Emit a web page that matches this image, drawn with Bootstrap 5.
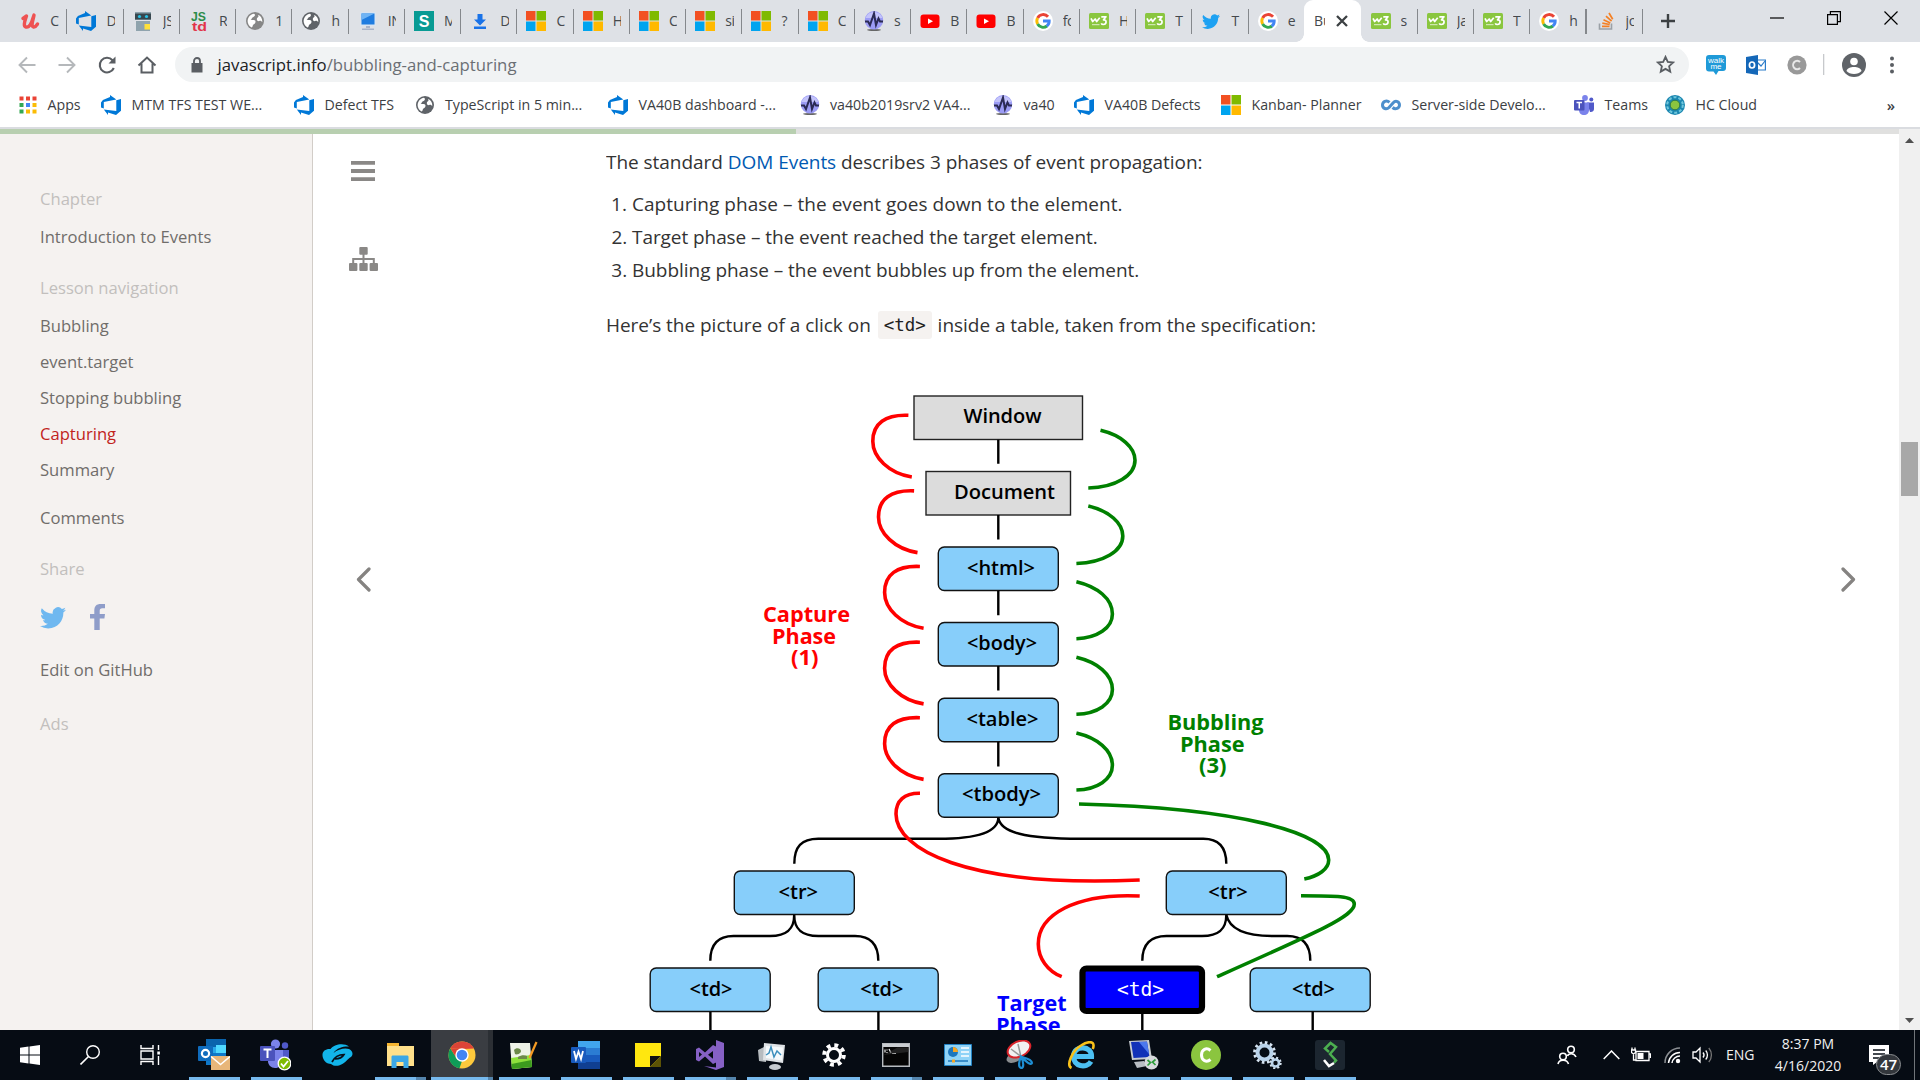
<!DOCTYPE html>
<html lang="en">
<head>
<meta charset="utf-8">
<title>Bubbling and capturing</title>
<link href="https://cdn.jsdelivr.net/npm/bootstrap@5.3.0/dist/css/bootstrap.min.css" rel="stylesheet">
<script src="https://cdn.jsdelivr.net/npm/bootstrap@5.3.0/dist/js/bootstrap.bundle.min.js"></script>
<style>
body{height:1080px;font-family:"Open Sans","Noto Sans",sans-serif;color:#333;background:#fff}
svg{display:block;flex:none}
.ic{width:20px;height:20px}
/* tab strip */
.tabstrip{height:42px;background:#dee1e6;padding-left:10.2px;font-size:14px;color:#45494d}
.btab{width:56.26px;height:42px;padding-left:10px;gap:10px;position:relative;flex:none}
.btab:not(.last)::after{content:"";position:absolute;right:-1px;top:9px;width:1.2px;height:25px;background:#85888c}
.btab .ttl{width:8.5px;overflow:hidden;white-space:nowrap;line-height:20px;letter-spacing:-.3px}
.btab-active{width:56.6px;height:42px;background:#fff;border-radius:9px 9px 0 0;position:relative;padding-left:10px;gap:11px;flex:none}
.btab-active::before,.btab-active::after{content:"";position:absolute;bottom:0;width:8px;height:8px}
.btab-active::before{left:-8px;background:radial-gradient(circle at 0 0,transparent 7.5px,#fff 8px)}
.btab-active::after{right:-8px;background:radial-gradient(circle at 100% 0,transparent 7.5px,#fff 8px)}
.btab-active .ttl{width:11px;overflow:hidden;line-height:20px}
.newtab{margin-left:18.5px}
.winctl{padding-right:22px;gap:43px;padding-bottom:6px}
/* toolbar */
.toolrow{height:45px;padding-left:17px;padding-right:18px}
.navbtns{width:158px;gap:20px}
.omni{height:35px;width:1514px;border-radius:18px;background:#f1f3f4;padding:0 14px 0 15px;font-size:16.75px;color:#6b6f74}
.omni .url{margin-left:13.5px}
.omni .host{color:#202124}
.exts{padding-left:17px}
/* bookmarks */
.bmrow{height:40px;padding-left:18px;font-size:14.2px;color:#3c4043;border:0}
.bm{gap:10.5px;white-space:nowrap;flex:none}
.bm:nth-child(1){width:83px;gap:9.5px}.bm:nth-child(2){width:193px}.bm:nth-child(3){width:120.5px}.bm:nth-child(4){width:193.5px}
.bm:nth-child(5){width:191.5px}.bm:nth-child(6){width:193.5px}.bm:nth-child(7){width:81px}.bm:nth-child(8){width:147px}
.bm:nth-child(9){width:160px}.bm:nth-child(10){width:193px}.bm:nth-child(11){width:91px}.bm:nth-child(12){width:130px}
.more{margin-right:25px;font-size:15px}
.hairline{height:2px;background:#dadce0}
/* page */
.page{height:901px}
.readbar{--bs-progress-height:5px;--bs-progress-bg:#e0e0df;--bs-progress-bar-bg:#b8cfb0;border-radius:0}
.side{width:313px;background:#f5f2f0;border-right:1.3px solid #d2cdc8;padding:47px 0 0 40px;font-size:16.6px;color:#706d6a;line-height:36px}
.side h4{font-size:inherit;line-height:36px;font-weight:400;color:#c2bfbd;margin:15.5px 0 0}
.side h4:first-child{margin:0 0 1.5px}
.side ul{padding-top:1.5px}
.side li,.side .ln{height:36px}
.side .cur{color:#c1231c}
.side .comments{margin-top:12px}
.side .social{gap:24px;height:26px;margin:17px 0 22px}
.side .ads{margin-top:17.5px}
.railL{width:293px;padding:27px 0 0 35px}
.railL>div{width:30px}
.tree{margin:66px 0 296px}
.lesson{width:820px;padding-top:11.5px;font-size:19px;line-height:33px;letter-spacing:-.03px;overflow:hidden;flex:none}
.lesson p{margin:0;white-space:nowrap}
.lesson p:first-child{letter-spacing:-.04px}
.lesson li:first-child{letter-spacing:.03px}
.lesson li:nth-child(2){letter-spacing:-.07px}
.lesson a{color:#0059b2;text-decoration:none}
.lesson ol{margin:9.5px 0 22px;padding:0 0 0 26px}
.lesson code{display:inline-block;font:17.5px/28px "DejaVu Sans Mono",monospace;color:#222;background:#f5f2f0;border-radius:3px;padding:0 6px;margin:0 1px 0 2px;vertical-align:1px}
.dia text{font-weight:600;font-size:19.4px}
.dia .lg text{font-weight:700;font-size:22px}
.dia .hot{font-family:"DejaVu Sans Mono",monospace;font-weight:400}
.railR{padding:433px 43px 0 0}
.sbar{width:21px;background:#f0f0f0}
.sbar .thumb{width:17px;height:54px;background:#a8a8a8;margin:299px 2px 0}
.sbar .up{margin-top:9px}.sbar .down{margin-bottom:7px}
/* taskbar */
.taskbar{height:50px;background:#060c14;color:#f1f1f1}
.tk{width:62px;height:50px;flex:none;position:relative}
.tk.sm{width:60px}.tk.md{width:62.5px}
.tk.md svg{margin-right:2px}
.tk.run::after{content:"";position:absolute;left:6px;width:51px;bottom:0;height:3px;background:#76b9ed}
.tk.multi::after{background:linear-gradient(90deg,#76b9ed 41px,#5485ad 41px)}
.tk.front{background:linear-gradient(90deg,#3a3d42 57px,#2b2f34 57px)}
.tk.front::after{left:0;width:62px;background:linear-gradient(90deg,#76b9ed 57px,#5485ad 57px)}
.tray{font-size:14px;line-height:22.5px;padding-right:5px}
.tray .eng{width:47px}
.tray .clock{width:70px;white-space:nowrap}
.tray .note{margin:0 25px 0 26px}
.cnt{position:absolute;left:7px;top:9px;width:25px;height:21px;border-radius:11px;background:#33373c;border:1px solid #8a8d90;font-size:15px;font-weight:600;line-height:18px;text-align:center;color:#fff}
</style>
</head>
<body class="d-flex flex-column overflow-hidden">
<svg width="0" height="0" class="position-absolute" aria-hidden="true">
<symbol id="az" viewBox="0 0 20 20"><path fill="#0078d7" d="M0 7.4 1.9 4.9 9 2V0l6.300 4.500L2.800 7v6.400L0 12.600zM20 4v11.700l-5 4.300-8-2.600V20L2.800 14.600l12.500 1.500V5.300z"/></symbol>
<symbol id="ms" viewBox="0 0 20 20"><path fill="#f25022" d="M0 0h9.500v9.500H0z"/><path fill="#7fba00" d="M10.500 0H20v9.500h-9.500z"/><path fill="#00a4ef" d="M0 10.500h9.500V20H0z"/><path fill="#ffb900" d="M10.500 10.500H20V20h-9.500z"/></symbol>
<symbol id="globe" viewBox="0 0 20 20"><circle cx="10" cy="10" r="9" fill="currentColor"/><path fill="#fff" d="M9 2.800c2 1 .5 3-1 3.500S7 8.500 5.500 9c2 0 5-.5 5 1.500s-1 2.500-2 3S8 16 6.500 16.500C4 15 2.600 12.500 2.600 10 3 6 5.500 3.200 9 2.800zM13.500 4c2.500 1.200 4 4 3.800 7-1-.5-1.500-1.500-3-1s-2.500-.5-2.500-2 1.700-1.500 1.700-2.500-.7-1 0-1.500z"/></symbol>
<symbol id="pulse" viewBox="0 0 20 20"><ellipse cx="10" cy="19" rx="7" ry=".9" fill="#666"/><circle cx="10" cy="9.300" r="9.200" fill="#9c9cf5"/><path d="M1.500 7a9 9 0 0 1 17 0z" fill="#c3c3fb"/><path fill="none" stroke="#2b2b55" stroke-width="2" d="M1 10.500h3l2 3.500L10 2.500 12 14l2.500-6.500 1.500 3h3"/></symbol>
<symbol id="yt" viewBox="0 0 20 20"><rect x=".5" y="3.500" width="19" height="13.500" rx="3" fill="#f00"/><path fill="#fff" d="m8 7.500 5 2.800-5 2.800z"/></symbol>
<symbol id="goo" viewBox="0 0 20 20"><circle cx="10" cy="10" r="10" fill="#fff"/><g fill="none" stroke-width="2.900"><path stroke="#ea4335" d="M15 5.700A6.300 6.300 0 0 0 4.600 7"/><path stroke="#fbbc05" d="M4.600 7a6.300 6.300 0 0 0 0 6"/><path stroke="#34a853" d="M4.600 13a6.300 6.300 0 0 0 9.400 2"/><path stroke="#4285f4" d="M13.700 15.200A6.300 6.300 0 0 0 16.200 10H10"/></g></symbol>
<symbol id="w3" viewBox="0 0 20 20"><rect y="2" width="20" height="16" rx="1.500" fill="#8ac63f"/><path fill="none" stroke="#fff" stroke-width="1.700" stroke-linejoin="round" d="m2 7.300 1.700 3.200L6.200 8l1.500 2.500 3-3.700M12.300 5.800H17l-2.500 3c3.600-.2 3.300 4.700-.2 4.700-1 0-1.700-.4-2.100-1.200"/><path stroke="#dff0c8" stroke-width="1" d="M3 13.700h7.500"/></symbol>
<symbol id="tw" viewBox="0 0 16 16"><path fill="currentColor" d="M5.026 15c6.038 0 9.341-5.003 9.341-9.334 0-.14 0-.282-.006-.422A6.685 6.685 0 0 0 16 3.542a6.658 6.658 0 0 1-1.889.518 3.301 3.301 0 0 0 1.447-1.817 6.533 6.533 0 0 1-2.087.793A3.286 3.286 0 0 0 7.875 6.030a9.325 9.325 0 0 1-6.767-3.429 3.289 3.289 0 0 0 1.018 4.382A3.323 3.323 0 0 1 .64 6.575v.045a3.288 3.288 0 0 0 2.632 3.218 3.203 3.203 0 0 1-.865.115 3.230 3.230 0 0 1-.614-.057 3.283 3.283 0 0 0 3.067 2.277A6.588 6.588 0 0 1 .780 13.580a6.320 6.320 0 0 1-.780-.045A9.344 9.344 0 0 0 5.026 15z"/></symbol>
</svg>

<header>
<div class="tabstrip d-flex align-items-center">
<div class="btab d-flex align-items-center"><svg class="ic" viewBox="0 0 20 20"><path fill="none" stroke="#ee5252" stroke-width="3.400" stroke-linecap="round" stroke-linejoin="round" d="M3 7.500 6.500 5c-1 3.500-4 10-.5 11s6-5 7-9l1-3c-.5 4-3.500 11-.5 12 1.800.5 3-1.500 4-3"/></svg><span class="ttl">C</span></div>
<div class="btab d-flex align-items-center"><svg class="ic"><use href="#az"/></svg><span class="ttl">D</span></div>
<div class="btab d-flex align-items-center"><svg class="ic" viewBox="0 0 20 20"><path fill="#8fa3ad" d="M2 1h16v8H2zM3 10h14v10H3z"/><path fill="#37474f" d="M2 2.500h16v6H2z"/><circle cx="6.500" cy="5.500" r="1.600" fill="#29c4e8"/><circle cx="13.500" cy="5.500" r="1.600" fill="#29c4e8"/><path fill="#ffe13a" d="M11.500 13h5.500v5.500h-5.500z"/></svg><span class="ttl">JS</span></div>
<div class="btab d-flex align-items-center"><svg class="ic" viewBox="0 0 20 20"><text x="2" y="10" font-family="Liberation Sans" font-weight="700" font-size="13" fill="#2c8c4a" textLength="15" lengthAdjust="spacingAndGlyphs">JS</text><text x="3" y="19.500" font-family="Liberation Sans" font-weight="700" font-size="13" fill="#e2344a" textLength="15" lengthAdjust="spacingAndGlyphs">td</text></svg><span class="ttl">R</span></div>
<div class="btab d-flex align-items-center"><svg class="ic" color="#868686"><use href="#globe"/></svg><span class="ttl">1</span></div>
<div class="btab d-flex align-items-center"><svg class="ic" color="#5f6368"><use href="#globe"/></svg><span class="ttl">h</span></div>
<div class="btab d-flex align-items-center"><svg class="ic" viewBox="0 0 20 20"><rect x="2" y="1" width="16" height="14" rx="1" fill="#d9e4f1"/><rect x="3.500" y="2.500" width="13" height="11" fill="#1f7ce0"/><path fill="#6fb4f5" d="M3.500 2.500h13L3.500 9z"/><path fill="#a9b4c9" d="M8 15h4v2H8zM4 17.500h12V19H4z"/></svg><span class="ttl">IN</span></div>
<div class="btab d-flex align-items-center"><svg class="ic" viewBox="0 0 20 20"><path fill="#089b94" d="M0 0h20v20H0z"/><text x="10" y="16" text-anchor="middle" font-family="Liberation Sans" font-weight="700" font-size="16" fill="#fff">S</text></svg><span class="ttl">M</span></div>
<div class="btab d-flex align-items-center"><svg class="ic" viewBox="0 0 20 20"><path fill="#1a73e8" d="M7.500 3h5v5.500H16l-6 6-6-6h3.500zM4 15.500h12V18H4z"/></svg><span class="ttl">D</span></div>
<div class="btab d-flex align-items-center"><svg class="ic"><use href="#ms"/></svg><span class="ttl">C</span></div>
<div class="btab d-flex align-items-center"><svg class="ic"><use href="#ms"/></svg><span class="ttl">H</span></div>
<div class="btab d-flex align-items-center"><svg class="ic"><use href="#ms"/></svg><span class="ttl">C</span></div>
<div class="btab d-flex align-items-center"><svg class="ic"><use href="#ms"/></svg><span class="ttl">si</span></div>
<div class="btab d-flex align-items-center"><svg class="ic"><use href="#ms"/></svg><span class="ttl">?</span></div>
<div class="btab d-flex align-items-center"><svg class="ic"><use href="#ms"/></svg><span class="ttl">C</span></div>
<div class="btab d-flex align-items-center"><svg class="ic"><use href="#pulse"/></svg><span class="ttl">s</span></div>
<div class="btab d-flex align-items-center"><svg class="ic"><use href="#yt"/></svg><span class="ttl">B</span></div>
<div class="btab d-flex align-items-center"><svg class="ic"><use href="#yt"/></svg><span class="ttl">B</span></div>
<div class="btab d-flex align-items-center"><svg class="ic"><use href="#goo"/></svg><span class="ttl">fo</span></div>
<div class="btab d-flex align-items-center"><svg class="ic"><use href="#w3"/></svg><span class="ttl">H</span></div>
<div class="btab d-flex align-items-center"><svg class="ic"><use href="#w3"/></svg><span class="ttl">T</span></div>
<div class="btab d-flex align-items-center"><svg class="ic" color="#1da1f2"><use href="#tw" x="1" y="1" width="18" height="18"/></svg><span class="ttl">T</span></div>
<div class="btab last d-flex align-items-center"><svg class="ic"><use href="#goo"/></svg><span class="ttl">e</span></div>
<div class="btab-active d-flex align-items-center"><span class="ttl">Bu</span><svg width="12" height="12" viewBox="0 0 12 12"><path stroke="#3c4043" stroke-width="2.300" d="m1 1 10 10M11 1 1 11"/></svg></div>
<div class="btab d-flex align-items-center"><svg class="ic"><use href="#w3"/></svg><span class="ttl">s</span></div>
<div class="btab d-flex align-items-center"><svg class="ic"><use href="#w3"/></svg><span class="ttl">Ja</span></div>
<div class="btab d-flex align-items-center"><svg class="ic"><use href="#w3"/></svg><span class="ttl">T</span></div>
<div class="btab d-flex align-items-center"><svg class="ic"><use href="#goo"/></svg><span class="ttl">h</span></div>
<div class="btab d-flex align-items-center"><svg class="ic" viewBox="0 0 20 20"><path fill="none" stroke="#9aa0a6" stroke-width="1.600" d="M3.500 12.500V18h12v-5.500"/><g stroke="#f48024" stroke-width="1.700"><path d="M6 15.300h7.500M6.300 12.200l7.400 1.300M7.500 8.700l6.800 3.200M10 5.200l5.600 5M13 2l3.700 6.200"/></g></svg><span class="ttl">jo</span></div>
<svg class="newtab" width="16" height="16" viewBox="0 0 16 16"><path stroke="#3c4043" stroke-width="2.400" d="M8 1v14M1 8h14"/></svg>
<div class="winctl d-flex align-items-center ms-auto"><svg width="14" height="14"><path stroke="#000" stroke-width="1.200" d="M0 7h14"/></svg><svg width="14" height="14"><path fill="none" stroke="#000" stroke-width="1.200" d="M.6 3.600h9.800v9.800H.6zM3.400 3.600V.6h10v10h-3"/></svg><svg width="14" height="14"><path stroke="#000" stroke-width="1.200" d="m.5.5 13 13M13.500.5l-13 13"/></svg></div>
</div>

<div class="toolrow d-flex align-items-center">
<div class="navbtns d-flex align-items-center">
<svg class="ic" viewBox="0 0 20 20"><path fill="none" stroke="#b5b8bb" stroke-width="1.900" d="M18.500 10H3M10 2.500 2.500 10l7.500 7.500"/></svg>
<svg class="ic" viewBox="0 0 20 20"><path fill="none" stroke="#b5b8bb" stroke-width="1.900" d="M1.500 10H17M10 2.500l7.500 7.500-7.500 7.500"/></svg>
<svg class="ic" viewBox="0 0 20 20"><path fill="none" stroke="#5a5e63" stroke-width="2.100" d="M16.800 13A7.300 7.300 0 1 1 15.500 5.200L17 7"/><path fill="#5a5e63" d="M18.500 1.500v7h-7z"/></svg>
<svg class="ic" viewBox="0 0 20 20"><path fill="none" stroke="#5a5e63" stroke-width="2" d="M1.500 10.500 10 2.500l8.500 8M4.500 8.500v9h11v-9"/></svg>
</div>
<div class="omni d-flex align-items-center"><svg width="14" height="16" viewBox="0 0 14 16"><path fill="#5a5e63" d="M1.500 6h11v9.500h-11z"/><path fill="none" stroke="#5a5e63" stroke-width="1.800" d="M4 7V4a3 3 0 0 1 6 0v3"/></svg><span class="url"><span class="host">javascript.info</span>/bubbling-and-capturing</span>
<svg class="ms-auto" width="19" height="19" viewBox="0 0 20 20"><path fill="none" stroke="#5a5e63" stroke-width="1.900" d="m10 2 2.400 5.300 5.600.6-4.200 3.900 1.200 5.700-5-2.900-5 2.900 1.200-5.700L2 7.900l5.600-.6z"/></svg></div>
<div class="exts d-flex align-items-center flex-grow-1 justify-content-between">
<svg class="ic" viewBox="0 0 20 20"><path fill="#1f9ad8" d="M3 0h14a3 3 0 0 1 3 3v10a3 3 0 0 1-3 3h-4.500L10 20l-2.500-3.500H3a3 3 0 0 1-3-3V3a3 3 0 0 1 3-3z"/><g fill="#fff" font-family="Liberation Sans" font-size="8" text-anchor="middle"><text x="10" y="7.500">walk</text><text x="10" y="14">me</text></g></svg>
<svg class="ic ms-1" viewBox="0 0 20 20"><path fill="#fff" stroke="#2b7cc9" stroke-width="1.200" d="M11 5h8.400v10H11z"/><path fill="none" stroke="#2b7cc9" stroke-width="1.200" d="m11 7 4 4 4-5"/><path fill="#1467b8" d="m0 2 12-2v20L0 18z"/><ellipse cx="6" cy="10" rx="2.600" ry="3" fill="none" stroke="#fff" stroke-width="1.700"/></svg>
<svg class="ic ms-1" viewBox="0 0 20 20"><circle cx="10" cy="10" r="9.600" fill="#999"/><path fill="none" stroke="#e8e8e8" stroke-width="2" d="M13 7a4 4.300 0 1 0 0 6"/></svg>
<svg width="2" height="21"><path fill="#c7c9cc" d="M0 0h1.300v21H0z"/></svg>
<svg width="24" height="24" viewBox="0 0 24 24"><circle cx="12" cy="12" r="12" fill="#5f6368"/><circle cx="12" cy="8.500" r="3.800" fill="#fff"/><path fill="#fff" d="M4.500 18c1-5.300 14-5.300 15 0-3 4-12 4-15 0z"/></svg>
<svg width="20" height="20" viewBox="0 0 20 20"><g fill="#5a5e63"><circle cx="10" cy="3.500" r="2"/><circle cx="10" cy="10" r="2"/><circle cx="10" cy="16.500" r="2"/></g></svg>
</div>
</div>

<div class="bmrow d-flex align-items-center pb-1">
<div class="bm d-flex align-items-center"><svg class="ic" viewBox="0 0 20 20"><path fill="#ea4335" d="M1.500 1.500h4v4h-4zM8 1.500h4v4H8zM14.500 1.500h4v4h-4z"/><path fill="#34a853" d="M1.500 8h4v4h-4zM1.500 14.500h4v4h-4z"/><path fill="#4285f4" d="M8 8h4v4H8z"/><path fill="#fbbc05" d="M14.500 8h4v4h-4zM8 14.500h4v4H8zM14.500 14.500h4v4h-4z"/></svg>Apps</div>
<div class="bm d-flex align-items-center"><svg class="ic"><use href="#az"/></svg>MTM TFS TEST WE...</div>
<div class="bm d-flex align-items-center"><svg class="ic"><use href="#az"/></svg>Defect TFS</div>
<div class="bm d-flex align-items-center"><svg class="ic" color="#5f6368"><use href="#globe"/></svg>TypeScript in 5 min...</div>
<div class="bm d-flex align-items-center"><svg class="ic"><use href="#az"/></svg>VA40B dashboard -...</div>
<div class="bm d-flex align-items-center"><svg class="ic"><use href="#pulse"/></svg>va40b2019srv2 VA4...</div>
<div class="bm d-flex align-items-center"><svg class="ic"><use href="#pulse"/></svg>va40</div>
<div class="bm d-flex align-items-center"><svg class="ic"><use href="#az"/></svg>VA40B Defects</div>
<div class="bm d-flex align-items-center"><svg class="ic"><use href="#ms"/></svg>Kanban- Planner</div>
<div class="bm d-flex align-items-center"><svg class="ic" viewBox="0 0 20 20"><path fill="none" stroke="#4d8fcc" stroke-width="3" d="M8.500 7.300C5.500 4.500 1.500 6.500 1.500 10s4 5 6.500 2.500l4-4.500c3-3.500 6.500-1 6.500 2s-4 5-7 2.500"/></svg>Server-side Develo...</div>
<div class="bm d-flex align-items-center"><svg class="ic" viewBox="0 0 20 20"><circle cx="17.300" cy="4.500" r="2" fill="#5059c9"/><circle cx="11" cy="3" r="2.900" fill="#7b83eb"/><path fill="#5059c9" d="M13 7.500h7V14c0 2-2 3.500-4 3z"/><path fill="#7b83eb" d="M5 7.500h10V15c0 3-2 5-5 5s-5-2-5-5z"/><rect y="5" width="10.500" height="10.500" rx="1" fill="#4b53bc"/><path stroke="#fff" stroke-width="1.500" d="M2.500 7.500H8M5.250 7.500v6"/></svg>Teams</div>
<div class="bm d-flex align-items-center"><svg class="ic" viewBox="0 0 20 20"><circle cx="10" cy="10" r="10" fill="#1a86b0"/><circle cx="10" cy="10" r="7.800" fill="none" stroke="#6fc7dc" stroke-width="2" stroke-dasharray="3 2"/><circle cx="10" cy="10" r="4.800" fill="#8bc53f" stroke="#2a7a4c"/></svg>HC Cloud</div>
<span class="more ms-auto fw-semibold">»</span>
</div>
<div class="hairline"></div>
</header>

<main class="page d-flex">
<div class="flex-grow-1 d-flex flex-column">
<div class="progress readbar"><div class="progress-bar" style="width:41.900%"></div></div>
<div class="d-flex flex-grow-1 overflow-hidden">
<aside class="side">
<h4>Chapter</h4>
<div class="ln">Introduction to Events</div>
<h4>Lesson navigation</h4>
<ul class="list-unstyled m-0"><li>Bubbling</li><li>event.target</li><li>Stopping bubbling</li><li class="cur">Capturing</li><li>Summary</li></ul>
<div class="ln comments">Comments</div>
<h4>Share</h4>
<div class="social d-flex align-items-center"><svg width="26" height="26" color="#6fb8f0"><use href="#tw"/></svg><svg width="15" height="26" viewBox="0 0 15 26"><path fill="#8f9dc9" d="M4.300 26V14.500H0V10h4.300V6.500C4.300 2 6.800 0 10.500 0H15v4.300h-2.700c-2 0-2.600.9-2.600 2.600V10H15l-.6 4.500H9.700V26z"/></svg></div>
<div class="ln">Edit on GitHub</div>
<h4 class="ads">Ads</h4>
</aside>
<div class="railL">
<div class="d-flex flex-column align-items-center">
<svg width="24" height="20"><path fill="#8a8886" d="M0 0h24v3.800H0zM0 8.100h24v3.800H0zM0 16.200h24V20H0z"/></svg>
<svg class="tree" width="29" height="24" viewBox="0 0 29 24"><g fill="#8a8886"><rect x="10.300" width="8.400" height="7.800" rx="1"/><rect y="16" width="8.400" height="8" rx="1"/><rect x="10.300" y="16" width="8.400" height="8" rx="1"/><rect x="20.600" y="16" width="8.400" height="8" rx="1"/></g><path fill="none" stroke="#8a8886" stroke-width="2" d="M14.500 7v10M4.200 17v-5h20.600v5"/></svg>
<svg width="15" height="25" viewBox="0 0 15 25"><path fill="none" stroke="#858381" stroke-width="3.200" stroke-linecap="round" stroke-linejoin="round" d="M13 2 2.500 12.500 13 23"/></svg>
</div>
</div>
<article class="lesson">
<p>The standard <a href="#">DOM Events</a> describes 3 phases of event propagation:</p>
<ol><li>Capturing phase – the event goes down to the element.</li><li>Target phase – the event reached the target element.</li><li>Bubbling phase – the event bubbles up from the element.</li></ol>
<p>Here’s the picture of a click on <code>&lt;td&gt;</code> inside a table, taken from the specification:</p>
<svg class="dia" width="820" height="688" viewBox="606 342 820 688" font-family="Open Sans, Noto Sans, sans-serif">
<g fill="#dcdcdc" stroke="#222" stroke-width="1.400"><rect x="914" y="396" width="168.500" height="43.500"/><rect x="926" y="471.500" width="144.500" height="43.500"/></g>
<g fill="#87cefa" stroke="#111" stroke-width="1.400"><rect x="938.300" y="547" width="120" height="43.500" rx="6"/><rect x="938.300" y="622.500" width="120" height="43.500" rx="6"/><rect x="938.300" y="698.300" width="120" height="43.500" rx="6"/><rect x="938.300" y="773.800" width="120" height="43.500" rx="6"/><rect x="734.300" y="871" width="120" height="43.500" rx="6"/><rect x="1166.300" y="871" width="120" height="43.500" rx="6"/><rect x="650.200" y="968" width="120" height="43.500" rx="6"/><rect x="818.200" y="968" width="120" height="43.500" rx="6"/><rect x="1250.200" y="968" width="120" height="43.500" rx="6"/></g>
<g fill="none" stroke="#000" stroke-width="2.400"><path d="M998.300 439.700v24M998.300 515v24.500M998.300 590.700v24.500M998.300 666v24.500M998.300 742v24.500M710.400 1011.700v30M878.400 1011.700v30M1142.300 1014v30M1312.700 1011.700v30"/><path d="M998.300 817.500c0 15-22 21.300-60 21.300H818.300c-17 0-24 8-24 25M998.300 817.500c2 15 27 21.300 82 21.300h123c16 0 23 9 23 25M794.200 914.700c0 14-7 21.300-24.200 21.300h-36.500c-16 0-23.200 9-23.200 24.800M794.200 914.700c0 14 7 21.300 24.200 21.300H855c16 0 23.300 9 23.300 24.800M1226.300 914.700c0 14-7 21.300-24.300 21.300h-35.500c-16.500 0-24.200 9-24.200 24.800M1226.300 914.700c3 14 17 21.300 47 21.300h14c16 0 23 9 23 24.800"/></g>
<rect x="1082.500" y="968.500" width="119.500" height="42.500" rx="4" fill="#00f" stroke="#000" stroke-width="6.200"/>
<g fill="none" stroke="#f00" stroke-width="3.600"><path d="M908.400 415.300c-23-1-35.600 8-35.600 26 0 16 16 32 39 35.700M914.100 490.900c-23-1-35.600 8-35.600 26 0 16 16 32 39 35.700M919.900 566.500c-23-1-35.300 8-35.300 26 0 16 16 32 39 35.700M919.900 642.200c-23-1-35.300 8-35.300 26 0 16 16 32 39 35.700M919.900 717.700c-23-1-35.300 8-35.300 26 0 16 16 32 39 35.700"/><path d="M920 793.300C904 793 896 801 896 814c0 34 67 74 243.700 66M1139.700 896c-64.700-3-101.400 19-101.400 48 0 14 9 27 23.400 32.700"/></g>
<g fill="none" stroke="green" stroke-width="3.600"><path d="M1100.500 430.300c21 5 34.500 17 34.500 30 0 15-19 27-46.700 27.700M1088.300 506c21 5 34.500 17 34.500 30 0 15-19 26.500-46.400 27.500M1076.400 581.700c21 5 36 17 36 32.300 0 14-15 24-36 24.700M1076.400 657.300c21 5 36 17 36 32.300 0 14-15 24-36 24.700M1076.400 733c21 5 36 17 36 32.300 0 14-15 24-36 24.700"/><path d="M1079 804c161 4 249.700 29 249.700 56 0 9-10 16-24.400 19M1301 895.700c34 0 53.300 0 53.300 8.300 0 12-34.300 27-137.300 72.700"/></g>
<g fill="#000">
<text x="963.500" y="423" textLength="78" lengthAdjust="spacingAndGlyphs">Window</text>
<text x="954" y="499" textLength="101" lengthAdjust="spacingAndGlyphs">Document</text>
<text x="967" y="575" textLength="68" lengthAdjust="spacingAndGlyphs">&lt;html&gt;</text>
<text x="967" y="650.300" textLength="70" lengthAdjust="spacingAndGlyphs">&lt;body&gt;</text>
<text x="966.500" y="726" textLength="72" lengthAdjust="spacingAndGlyphs">&lt;table&gt;</text>
<text x="962" y="801" textLength="79" lengthAdjust="spacingAndGlyphs">&lt;tbody&gt;</text>
<text x="778.500" y="899" textLength="39.500" lengthAdjust="spacingAndGlyphs">&lt;tr&gt;</text>
<text x="1208.300" y="899" textLength="39.500" lengthAdjust="spacingAndGlyphs">&lt;tr&gt;</text>
<text x="689.500" y="996" textLength="43" lengthAdjust="spacingAndGlyphs">&lt;td&gt;</text>
<text x="860.300" y="996" textLength="43" lengthAdjust="spacingAndGlyphs">&lt;td&gt;</text>
<text x="1292" y="996" textLength="43" lengthAdjust="spacingAndGlyphs">&lt;td&gt;</text>
</g>
<text class="hot" x="1117" y="996" textLength="47" lengthAdjust="spacingAndGlyphs" fill="#fff">&lt;td&gt;</text>
<g class="lg" fill="#f00"><text x="763" y="621.700" textLength="87" lengthAdjust="spacingAndGlyphs">Capture</text><text x="772" y="643.500" textLength="64" lengthAdjust="spacingAndGlyphs">Phase</text><text x="791" y="664.500" textLength="27.500" lengthAdjust="spacingAndGlyphs">(1)</text></g>
<g class="lg" fill="green"><text x="1167.500" y="729.700" textLength="96" lengthAdjust="spacingAndGlyphs">Bubbling</text><text x="1180" y="751.500" textLength="64.500" lengthAdjust="spacingAndGlyphs">Phase</text><text x="1199" y="772.500" textLength="27.500" lengthAdjust="spacingAndGlyphs">(3)</text></g>
<g class="lg" fill="#00f"><text x="997" y="1010.700" textLength="69.500" lengthAdjust="spacingAndGlyphs">Target</text><text x="996" y="1032.500" textLength="64.500" lengthAdjust="spacingAndGlyphs">Phase</text></g>
</svg>
</article>
<div class="railR ms-auto"><svg width="16" height="25" viewBox="0 0 16 25"><path fill="none" stroke="#858381" stroke-width="3.200" stroke-linecap="round" stroke-linejoin="round" d="M3 2l10.500 10.500L3 23"/></svg></div>
</div>
</div>
<div class="sbar d-flex flex-column align-items-center">
<svg class="up" width="9" height="5"><path fill="#505050" d="M0 5h9L4.500 0z"/></svg>
<div class="thumb"></div>
<svg class="down mt-auto" width="9" height="5"><path fill="#505050" d="M0 0h9L4.500 5z"/></svg>
</div>
</main>

<footer class="taskbar d-flex">
<div class="tk sm d-flex align-items-center justify-content-center"><svg class="ic" viewBox="0 0 20 20"><path fill="#fff" d="m0 2.700 8.500-1.200v8H0zM9.500 1.400 20 0v9.500H9.500zM0 10.500h8.500v8L0 17.300zM9.500 10.500H20V20L9.500 18.600z"/></svg></div>
<div class="tk sm d-flex align-items-center justify-content-center"><svg class="ic" viewBox="0 0 20 20"><circle cx="13" cy="7" r="6.300" fill="none" stroke="#fff" stroke-width="1.400"/><path stroke="#fff" stroke-width="1.600" d="m8.500 11.500-8 8"/></svg></div>
<div class="tk md d-flex align-items-center justify-content-center"><svg class="ic" viewBox="0 0 20 20"><path fill="none" stroke="#fff" stroke-width="1.400" d="M1 0v3.500h12V0M1 6h12v8H1zM1 20v-3.500h12V20M18.500 0v5M18.500 11v9"/><path fill="#fff" d="M17.300 6.500h2.600v3h-2.600z"/></svg></div>
<div class="tk run d-flex align-items-center justify-content-center"><svg width="32" height="32" viewBox="0 0 32 32"><path fill="#0a64ad" d="M8 0h20v8H8z"/><path fill="#28a8ea" d="M8 8h10v8H8z"/><path fill="#50d9ff" d="M18 6h10v8H18z"/><path fill="#0f78c8" d="M8 14h20v12H8z"/><rect y="7" width="15" height="15" rx="1" fill="#0f6cbd"/><circle cx="7.500" cy="14.500" r="3.600" fill="none" stroke="#fff" stroke-width="2.200"/><path fill="#e8b679" d="M13 17h19v14H13z"/><path fill="none" stroke="#fff" stroke-width="1.500" d="m13 17.500 9.500 8 9.500-8"/></svg></div>
<div class="tk run d-flex align-items-center justify-content-center"><svg width="31" height="32" viewBox="0 0 31 32"><circle cx="25" cy="6.500" r="3.200" fill="#5059c9"/><circle cx="15.500" cy="5" r="4.600" fill="#7b83eb"/><path fill="#5059c9" d="M18 11h11v10c0 3-4 5-7 4z"/><path fill="#7b83eb" d="M8 11h15v11c0 5-4 7-8 7s-7-3-7-7z"/><rect y="7" width="15" height="15" rx="1" fill="#4b53bc"/><path stroke="#fff" stroke-width="2" d="M3.500 10.500h8M7.500 10.500v8.500"/><circle cx="24.500" cy="24.500" r="6.300" fill="#7fba00" stroke="#fff" stroke-width="1.300"/><path fill="none" stroke="#fff" stroke-width="1.800" d="m21 24.500 2.500 3 4.500-5.500"/></svg></div>
<div class="tk d-flex align-items-center justify-content-center"><svg width="31" height="22" viewBox="0 0 31 22"><path fill="#12b5ea" d="M1 14C-1 8 3 4.500 8.500 5 12 0 22-1.500 27 2.500 23 2 15 3 11.500 9 16 5 23 3.500 27 5c5 2.500 4 7 1 8.500C25 16 22 20 17 21.500c-3 .7-6 .3-8-1.500-4 0-7-3-8-6z"/><path fill="none" stroke="#07101a" stroke-width="1.700" d="M10 18c3-6 7-7.500 12-7.500-2 3.500-6 4.500-9 4.500"/></svg></div>
<div class="tk run multi d-flex align-items-center justify-content-center"><svg width="28" height="28" viewBox="0 0 28 28"><path fill="#f6b632" d="M1 2h12v5H1z"/><path fill="#ffe08a" d="M1 5h27v20H1z"/><path fill="#3ba7e6" d="M5.500 27V16c0-1 .5-1.500 1.500-1.500h14c1 0 1.500.500 1.500 1.500v11h-5v-6h-7v6z"/></svg></div>
<div class="tk run front d-flex align-items-center justify-content-center"><svg width="28" height="28" viewBox="0 0 28 28"><circle cx="14" cy="14" r="13.500" fill="#fdc93c"/><path fill="#dc4437" d="M2.300 7.200a13.500 13.500 0 0 1 23.600.3L14 8z"/><path fill="#0f9d58" d="M2.300 7.200 8.500 17l5.500 3-2.500 7.300A13.500 13.500 0 0 1 2.300 7.200z"/><path fill="#dc4437" d="M2.300 7.200 8.500 17l1-6 4.500-3h11.900"/><circle cx="14" cy="14" r="6.700" fill="#fff"/><circle cx="14" cy="14" r="5.300" fill="#4285f4"/></svg></div>
<div class="tk run d-flex align-items-center justify-content-center"><svg width="29" height="28" viewBox="0 0 29 28"><path fill="#eef3e8" d="M1 2h20l2 24-20 2z"/><path fill="#8ee03c" d="m2 17 20-3 1 12-20 2z"/><path fill="#3c9b1e" d="m2.500 23 20-4 .5 7-20 2z"/><path fill="#6c8a4a" d="M5 9c2-3 7-2 7 1s-5 4-6 3zM9 16c3-2 7-2 9-1v3H9z"/><path stroke="#f59b23" stroke-width="2.200" d="m20.500 17 7-16"/></svg></div>
<div class="tk run d-flex align-items-center justify-content-center"><svg width="29" height="28" viewBox="0 0 29 28"><path fill="#41a5ee" d="M7 0h22v7H7z"/><path fill="#2b7cd3" d="M7 7h22v7H7z"/><path fill="#185abd" d="M7 14h22v7H7z"/><path fill="#103f91" d="M7 21h22v7H7z"/><rect y="6" width="15" height="16" rx="1" fill="#185abd"/><path fill="none" stroke="#fff" stroke-width="1.800" d="m3 10 2 8 2.500-7.500L10 18l2-8"/></svg></div>
<div class="tk run d-flex align-items-center justify-content-center"><svg width="26" height="26" viewBox="0 0 26 26"><path fill="#ffe70f" d="M0 1h26v24H0z"/><path fill="#111" d="M15 25V14h11z"/><path fill="#5c5305" d="M15 25h11V14z"/></svg></div>
<div class="tk run multi d-flex align-items-center justify-content-center"><svg width="28" height="30" viewBox="0 0 28 30"><path fill="#8661c5" d="m20 0 8 3v24l-8 3L8 26l12 1.500zM0 9l3-1.500 6 5L17 5l3 1.500v16L17 24l-8-7.500-6 5L0 20zm3 3v5l3-2.500zm14-1-5 3.800 5 4z"/></svg></div>
<div class="tk run d-flex align-items-center justify-content-center"><svg width="28" height="30" viewBox="0 0 28 30"><path fill="#b7bcc0" d="m0 10 8-4v16L1 21z"/><path fill="#dfe3e6" d="m6 3 21 2-2 18-20-3z"/><path fill="#f6fafc" d="m8 6 17 1.500-1 13-16-2.500z"/><path fill="none" stroke="#3c8fbd" stroke-width="1.500" d="m8 15 3-2 2-6 3 10 3-6 4 4"/><ellipse cx="17" cy="27" rx="6" ry="3" fill="#c6cbd0"/></svg></div>
<div class="tk run d-flex align-items-center justify-content-center"><svg width="24" height="24" viewBox="0 0 24 24"><circle cx="12" cy="12" r="6.500" fill="none" stroke="#fff" stroke-width="3"/><circle cx="12" cy="12" r="9.800" fill="none" stroke="#fff" stroke-width="4" stroke-dasharray="3.850 3.850"/></svg></div>
<div class="tk run multi d-flex align-items-center justify-content-center"><svg width="28" height="24" viewBox="0 0 28 24"><path fill="#050505" stroke="#b7bbbf" stroke-width="1.400" d="M.7.7h26.600v22.600H.7z"/><path fill="#c9cdd1" d="M1 1h26v3H1z"/><path fill="none" stroke="#eee" stroke-width="1.200" d="M3 6.500v3M5 6.500v1M5 9v1M7 6l2 4M10 10.500h4"/><path fill="#333" d="M1.500 12 26.500 9v-4.500h-11z" opacity=".6"/></svg></div>
<div class="tk run d-flex align-items-center justify-content-center"><svg width="28" height="26" viewBox="0 0 28 26"><path fill="#8fd3f7" stroke="#2383c4" d="M.5 2.500h27v21H.5z"/><circle cx="9" cy="10" r="5" fill="#1d77bd"/><path fill="#f5a623" d="M9 10V5a5 5 0 0 1 5 5z"/><path stroke="#fff" stroke-width="1.500" d="M17 6h8M17 10h8M17 14h8"/><path stroke="#1d77bd" stroke-width="1.500" d="M4 19h20"/><path fill="#f5a623" d="M8 17.500h3v3H8z"/></svg></div>
<div class="tk run d-flex align-items-center justify-content-center"><svg width="29" height="30" viewBox="0 0 29 30"><ellipse cx="10" cy="17" rx="9" ry="5" fill="#8a8d90" transform="rotate(-25 10 17)"/><ellipse cx="14" cy="9" rx="12" ry="7.500" fill="#f2f2f2" stroke="#d8232a" stroke-width="2" transform="rotate(-25 14 9)"/><path stroke="#999" stroke-width="1.500" d="m6 9 12 9M13 4l3 13"/><path fill="none" stroke="#1e8fd5" stroke-width="2.200" d="M16 17c-2 4-3 10 0 11 3 0 3-6 0-11zm1 0c4 1 10 3 10 6-1 3-7-2-10-6z"/></svg></div>
<div class="tk run d-flex align-items-center justify-content-center"><svg width="29" height="29" viewBox="0 0 29 29"><path fill="none" stroke="#4cc0f2" stroke-width="5.200" d="M6 15.500h18.500c.5-11-17-12-18-.5-.5 10.500 13 13 17.500 5.500"/><path fill="none" stroke="#f9c21a" stroke-width="2.600" d="M4.500 27C-1 24 5 10 14 4.500 21 0 27 0 26.500 5c0 1-.3 2-.8 3"/></svg></div>
<div class="tk run d-flex align-items-center justify-content-center"><svg width="30" height="30" viewBox="0 0 30 30"><path fill="#c8cdd2" d="m0 1 20-1 3 19-20 1z"/><path fill="#1232b8" d="m2 2 16-.5L20.500 17 4.500 18z"/><path fill="#4c78ee" d="M10 2h8l2 12z"/><path fill="#b8bec4" d="m5 22 10-1 3 5-10 2z"/><circle cx="22.500" cy="22.500" r="7" fill="#d7dadd"/><path fill="none" stroke="#2e9e3c" stroke-width="1.700" d="m18.500 20 3 2.500-3 3M26.500 19.500l-3 2.500 3 3"/></svg></div>
<div class="tk run d-flex align-items-center justify-content-center"><svg width="30" height="30" viewBox="0 0 30 30"><circle cx="15" cy="15" r="15" fill="#8bc53f"/><path fill="none" stroke="#fff" stroke-width="3" d="M19.500 10.500c-4-3.500-9-1-9 4.500s5 8 9 4.500"/></svg></div>
<div class="tk run d-flex align-items-center justify-content-center"><svg width="29" height="28" viewBox="0 0 29 28"><circle cx="11.500" cy="11.500" r="7" fill="none" stroke="#b9d3ea" stroke-width="4"/><circle cx="11.500" cy="11.500" r="10" fill="none" stroke="#d6e4f1" stroke-width="2.800" stroke-dasharray="2.620 2.620"/><circle cx="22.500" cy="22" r="3.500" fill="none" stroke="#b9d3ea" stroke-width="2.600"/><circle cx="22.500" cy="22" r="5.300" fill="none" stroke="#d6e4f1" stroke-width="1.800" stroke-dasharray="2.080 2.080"/></svg></div>
<div class="tk run d-flex align-items-center justify-content-center"><svg width="30" height="30" viewBox="0 0 30 30"><rect width="30" height="30" rx="3" fill="#1c2630"/><path fill="none" stroke="#4caf50" stroke-width="2.500" d="M14 12 10 8.500 15.500 3l5.500 4-6 7 6 6.500-2 2"/><path fill="none" stroke="#fff" stroke-width="2.600" d="m9 20 5 6 5-3"/></svg></div>
<div class="tray d-flex align-items-center ms-auto">
<svg width="20" height="20" viewBox="0 0 20 20" style="margin-right:26px"><g fill="none" stroke="#fff" stroke-width="1.600"><circle cx="14" cy="4.500" r="3.300"/><circle cx="6" cy="11.500" r="3.300"/><path d="M10.500 11C11.500 8 17 7.500 19 12M1 19c1-5 9-5 10.500 0"/></g></svg>
<svg width="17" height="10" style="margin-right:11px"><path fill="none" stroke="#fff" stroke-width="1.500" d="m.7 9 7.800-8 7.800 8"/></svg>
<svg width="20" height="16" viewBox="0 0 20 16" style="margin-right:13px"><path fill="none" stroke="#fff" stroke-width="1.300" d="M5 4.500h13v9H5zM18.500 7h1v4M2.500 7v6h2M1 .5V3M4 .5V3M.5 3h4v2.500l-2 1.500-2-1.500z"/><path fill="#fff" d="M6.500 6h6v6h-6z"/></svg>
<svg width="17" height="17" viewBox="0 0 17 17" style="margin-right:11px"><g fill="none" stroke-width="1.500"><path stroke="#8b8f93" d="M1 16A15 15 0 0 1 16 1"/><path stroke="#fff" d="M4.500 16A11.500 11.500 0 0 1 16 5.500M8 16a8 8 0 0 1 8-7"/></g><circle cx="14" cy="14" r="2.200" fill="#fff"/></svg>
<svg width="21" height="18" viewBox="0 0 21 18" style="margin-right:13px"><g fill="none" stroke="#fff" stroke-width="1.300"><path d="M1 6h3l4-4v14l-4-4H1zM11 6.500c1.300 1.500 1.300 3.500 0 5M13.700 4.500c2.300 2.500 2.300 6.500 0 9"/><path stroke="#777" d="M16.800 2c3.500 4 3.500 10 0 14"/></g></svg>
<span class="eng">ENG</span>
<span class="clock text-center">8:37 PM<br>4/16/2020</span>
<div class="note position-relative"><svg width="20" height="20"><path fill="#fff" d="M0 0h20v17H8l-4 3v-3H0z"/><path stroke="#060c14" stroke-width="1.500" d="M4 5h12M4 9h12M4 13h6"/></svg><span class="cnt">47</span></div>
<svg width="1" height="50"><path fill="#70757a" d="M0 0h1v50H0z"/></svg>
</div>
</footer>
</body>
</html>
